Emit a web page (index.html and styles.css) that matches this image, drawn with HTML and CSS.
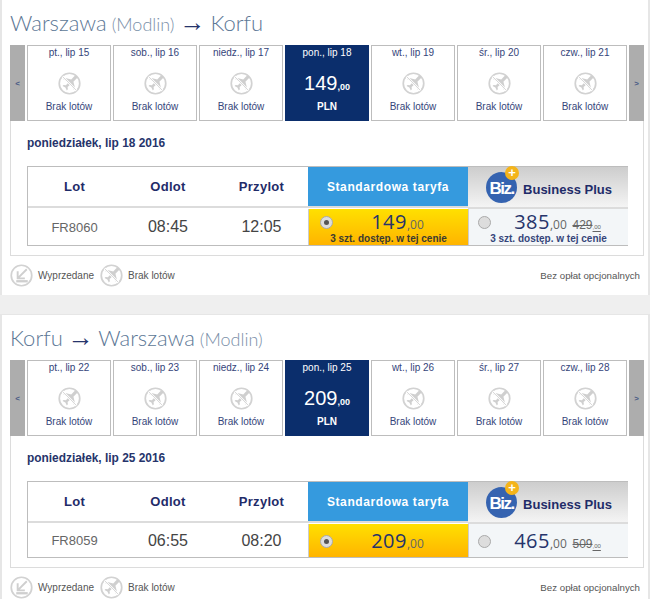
FILE: index.html
```html
<!DOCTYPE html>
<html lang="pl">
  <head>
    <meta charset="UTF-8" />
    <meta name="viewport" content="width=device-width, initial-scale=1.0" />
    <title>Wybór lotu</title>
    <link rel="stylesheet" href="styles.css">
  </head>
  <body>
    <svg class="icon-defs" width="0" height="0">
      <symbol id="noFlight" viewBox="0 0 24 24">
        <circle cx="12" cy="12" r="10.7" fill="#fff" stroke="#d2d2d2" stroke-width="1.8" />
        <path d="M19.6 4.4c.9.4.7 1.6-.2 2.5l-3.3 3.2 1.8 7.1-1.4 1.4-3.3-5.9-3.2 3 .3 2.4-1.1 1.1-1.5-3-3-1.5 1.1-1.1 2.4.3 3-3.2-5.9-3.3 1.4-1.4 7.1 1.8 3.2-3.3c.8-.8 1.5-1 2.6-.1z" fill="#cfcfcf" />
        <path d="M4.5 4.5l15 15" stroke="#fff" stroke-width="2.2" />
        <path d="M4.5 4.5l15 15" stroke="#d2d2d2" stroke-width="0.9" />
      </symbol>
      <symbol id="soldOut" viewBox="0 0 24 24">
        <circle cx="12" cy="12" r="10.7" fill="#fff" stroke="#d2d2d2" stroke-width="1.8" />
        <path d="M17.5 5.5L8.5 14.5M8 7.5v7.5h7.5" fill="none" stroke="#cfcfcf" stroke-width="2" />
        <path d="M6.5 18h12" stroke="#cfcfcf" stroke-width="2.4" />
      </symbol>
    </svg>

    <section class="panel">
      <h1 class="route">Warszawa <small>(Modlin)</small> <span class="arrow">→</span> Korfu</h1>
      <div class="cal">
        <div class="cal-arrow">&lt;</div>
        <div class="day"><span>pt., lip 15</span><svg class="day-icon"><use href="#noFlight" /></svg><span>Brak lotów</span></div>
        <div class="day"><span>sob., lip 16</span><svg class="day-icon"><use href="#noFlight" /></svg><span>Brak lotów</span></div>
        <div class="day"><span>niedz., lip 17</span><svg class="day-icon"><use href="#noFlight" /></svg><span>Brak lotów</span></div>
        <div class="day selected"><span>pon., lip 18</span><div class="day-price">149<small>,00</small></div><strong>PLN</strong></div>
        <div class="day"><span>wt., lip 19</span><svg class="day-icon"><use href="#noFlight" /></svg><span>Brak lotów</span></div>
        <div class="day"><span>śr., lip 20</span><svg class="day-icon"><use href="#noFlight" /></svg><span>Brak lotów</span></div>
        <div class="day"><span>czw., lip 21</span><svg class="day-icon"><use href="#noFlight" /></svg><span>Brak lotów</span></div>
        <div class="cal-arrow">&gt;</div>
      </div>
      <div class="detail">
        <h2 class="date">poniedziałek, lip 18 2016</h2>
        <div class="fares">
          <div class="head">Lot</div>
          <div class="head">Odlot</div>
          <div class="head">Przylot</div>
          <div class="head head-std">Standardowa taryfa</div>
          <div class="head head-biz">
            <div class="biz-logo">Biz.<span class="biz-plus">+</span></div>
            <span class="biz-name">Business Plus</span>
          </div>
          <div class="cell flight">FR8060</div>
          <div class="cell time">08:45</div>
          <div class="cell time">12:05</div>
          <div class="fare fare-std">
            <span class="radio checked"></span>
            <div class="price">149<small>,00</small></div>
            <div class="seats">3 szt. dostęp. w tej cenie</div>
          </div>
          <div class="fare fare-biz">
            <span class="radio"></span>
            <div class="price">385<small>,00</small> <s>429<small>,00</small></s></div>
            <div class="seats">3 szt. dostęp. w tej cenie</div>
          </div>
        </div>
      </div>
      <div class="legend">
        <svg class="legend-icon"><use href="#soldOut" /></svg><span>Wyprzedane</span>
        <svg class="legend-icon"><use href="#noFlight" /></svg><span>Brak lotów</span>
        <span class="legend-note">Bez opłat opcjonalnych</span>
      </div>
    </section>

    <section class="panel">
      <h1 class="route">Korfu <span class="arrow">→</span> Warszawa <small>(Modlin)</small></h1>
      <div class="cal">
        <div class="cal-arrow">&lt;</div>
        <div class="day"><span>pt., lip 22</span><svg class="day-icon"><use href="#noFlight" /></svg><span>Brak lotów</span></div>
        <div class="day"><span>sob., lip 23</span><svg class="day-icon"><use href="#noFlight" /></svg><span>Brak lotów</span></div>
        <div class="day"><span>niedz., lip 24</span><svg class="day-icon"><use href="#noFlight" /></svg><span>Brak lotów</span></div>
        <div class="day selected"><span>pon., lip 25</span><div class="day-price">209<small>,00</small></div><strong>PLN</strong></div>
        <div class="day"><span>wt., lip 26</span><svg class="day-icon"><use href="#noFlight" /></svg><span>Brak lotów</span></div>
        <div class="day"><span>śr., lip 27</span><svg class="day-icon"><use href="#noFlight" /></svg><span>Brak lotów</span></div>
        <div class="day"><span>czw., lip 28</span><svg class="day-icon"><use href="#noFlight" /></svg><span>Brak lotów</span></div>
        <div class="cal-arrow">&gt;</div>
      </div>
      <div class="detail">
        <h2 class="date">poniedziałek, lip 25 2016</h2>
        <div class="fares">
          <div class="head">Lot</div>
          <div class="head">Odlot</div>
          <div class="head">Przylot</div>
          <div class="head head-std">Standardowa taryfa</div>
          <div class="head head-biz">
            <div class="biz-logo">Biz.<span class="biz-plus">+</span></div>
            <span class="biz-name">Business Plus</span>
          </div>
          <div class="cell flight short">FR8059</div>
          <div class="cell time short">06:55</div>
          <div class="cell time short">08:20</div>
          <div class="fare fare-std short">
            <span class="radio checked"></span>
            <div class="price">209<small>,00</small></div>
          </div>
          <div class="fare fare-biz short">
            <span class="radio"></span>
            <div class="price">465<small>,00</small> <s>509<small>,00</small></s></div>
          </div>
        </div>
      </div>
      <div class="legend">
        <svg class="legend-icon"><use href="#soldOut" /></svg><span>Wyprzedane</span>
        <svg class="legend-icon"><use href="#noFlight" /></svg><span>Brak lotów</span>
        <span class="legend-note">Bez opłat opcjonalnych</span>
      </div>
    </section>
  </body>
</html>
```

FILE: styles.css
```css
body {
  margin: 0;
  font-family: "Liberation Sans", Arial, sans-serif;
  background: #efefef;
  color: #26346b;
  overflow: hidden;
}

.icon-defs {
  position: absolute;
}

.panel {
  background: #fff;
  border: 1px solid #e6e6e6;
  border-width: 1px 2px 0 2px;
  padding: 0 4px 0 8px;
  height: 295px;
  box-sizing: border-box;
  margin-bottom: 19px;
}

.panel:first-of-type {
  border-top: 0;
}

.route {
  margin: 0;
  height: 45px;
  line-height: 45px;
  font-family: "Lato", sans-serif;
  font-size: 22px;
  font-weight: 300;
  word-spacing: -1px;
  color: #5d7896;
  white-space: nowrap;
}

.route small {
  font-size: 18px;
  color: #7b90a8;
}

.route .arrow {
  font-family: "Liberation Sans", sans-serif;
  font-size: 26px;
  line-height: 1;
  color: #26346b;
}

.cal {
  display: flex;
  gap: 2px;
  height: 76px;
}

.cal-arrow {
  flex: 0 0 15px;
  background: #adadad;
  color: #4a5a85;
  font-size: 8px;
  font-weight: bold;
  display: flex;
  align-items: center;
  justify-content: center;
}

.day {
  flex: 1;
  box-sizing: border-box;
  border: 1px solid #bdbdbd;
  font-size: 10px;
  color: #35457a;
  text-align: center;
  display: flex;
  flex-direction: column;
  align-items: center;
  padding-top: 1px;
}

.day-icon {
  width: 23px;
  height: 23px;
  margin: 14px 0 6px;
}

.day.selected {
  background: #0b2e6c;
  border-color: #0b2e6c;
  color: #fff;
}

.day-price {
  font-size: 20px;
  line-height: 24px;
  margin: 13px 0 2px;
}

.day-price small {
  font-size: 9px;
  font-weight: bold;
}

.detail {
  box-sizing: border-box;
  border: 1px solid #dcdcdc;
  border-top: 0;
  padding: 0 15px 9px 16px;
}

.date {
  margin: 0;
  height: 45px;
  line-height: 44px;
  font-size: 11.9px;
  color: #26346b;
}

.fares {
  display: grid;
  grid-template-columns: 93px 94px 93px 160px 160px;
  border: 1px solid #bdbdbd;
  border-right-width: 2px;
  width: 601px;
  box-sizing: border-box;
}

.head {
  height: 39px;
  border-bottom: 2px solid #dcdcdc;
  display: flex;
  align-items: center;
  justify-content: center;
  font-size: 13px;
  font-weight: bold;
  letter-spacing: 0.3px;
  color: #1f2c69;
}

.head-std {
  background: #359ade;
  color: #fff;
  font-size: 12px;
  letter-spacing: 0.6px;
}

.head-biz {
  background: linear-gradient(#cdcdcd, #f4f4f4);
  gap: 6px;
  letter-spacing: 0;
  padding: 1px 0 0 2px;
}

.biz-name {
  margin-top: 3px;
}

.biz-logo {
  position: relative;
  width: 31px;
  height: 31px;
  border-radius: 50%;
  background: #3563b0;
  color: #fff;
  font-size: 17px;
  line-height: 33px;
  text-align: center;
  letter-spacing: -1.5px;
}

.biz-plus {
  position: absolute;
  top: -6px;
  right: -2px;
  width: 14px;
  height: 14px;
  border-radius: 50%;
  background: #f4b41a;
  font-size: 13px;
  line-height: 14px;
  letter-spacing: 0;
}

.cell {
  height: 36px;
  display: flex;
  align-items: center;
  justify-content: center;
}

.flight {
  font-size: 13px;
  color: #666;
}

.time {
  font-size: 16px;
  color: #444;
}

.fare {
  position: relative;
  height: 36px;
  text-align: center;
  padding-left: 18px;
  box-sizing: border-box;
  border-left: 1px solid #ccc;
}

.short {
  height: 33px;
}

.fare-std {
  background: linear-gradient(#ffe000, #ffb400);
}

.fare-biz {
  background: #f3f6f8;
}

.radio {
  position: absolute;
  left: 11px;
  top: 7px;
  width: 11px;
  height: 11px;
  border: 1px solid #aaa;
  border-radius: 50%;
  background: #ddd;
}

.fare-biz .radio {
  left: 9px;
}

.short .radio {
  top: 11px;
}

.radio.checked::after {
  content: "";
  position: absolute;
  left: 3px;
  top: 3px;
  width: 5px;
  height: 5px;
  border-radius: 50%;
  background: #555;
}

.price {
  font-family: "Open Sans", sans-serif;
  font-size: 20px;
  letter-spacing: 0.5px;
  line-height: 25px;
  padding-bottom: 1px;
  color: #26346b;
  white-space: nowrap;
}

.short .price {
  line-height: 33px;
  padding-bottom: 0;
}

.price small,
.price s {
  line-height: 1;
  letter-spacing: 0;
}

.price small {
  font-size: 12px;
  color: #666;
}

.price s {
  font-family: "Liberation Sans", sans-serif;
  font-size: 12px;
  color: #666;
}

.price s small {
  font-size: 6px;
}

.seats {
  margin: -1px 0 0 -18px;
  font-size: 10px;
  font-weight: bold;
  line-height: 10px;
  color: #3a3a30;
}

.fare-biz .seats {
  color: #35457a;
}

.legend {
  display: flex;
  align-items: center;
  height: 38px;
  font-size: 10px;
  color: #555;
}

.legend-icon {
  width: 23px;
  height: 23px;
  margin-right: 5px;
}

.legend span:nth-of-type(1) {
  margin-right: 6px;
}

.legend-note {
  margin-left: auto;
  margin-right: 4px;
  font-size: 9.7px;
}
```
